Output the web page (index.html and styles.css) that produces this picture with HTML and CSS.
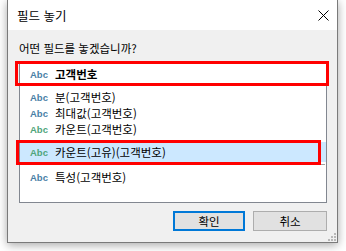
FILE: index.html
```html
<!DOCTYPE html>
<html lang="ko">
<head>
  <meta charset="UTF-8">
  <title>필드 놓기</title>
  <link rel="stylesheet" href="styles.css">
</head>
<body>

<div class="dialog">
  <div class="titlebar">
    <span class="title">필드 놓기</span>
    <svg class="close" width="11" height="11" viewBox="0 0 11 11">
      <path d="M0.5 0.5 L10.5 10.5 M10.5 0.5 L0.5 10.5" stroke="#000" stroke-width="1" fill="none"/>
    </svg>
  </div>

  <div class="content">
    <p class="prompt">어떤 필드를 놓겠습니까?</p>

    <div class="listbox">
      <div class="item item-head marked"><span class="type">Abc</span><span class="name">고객번호</span></div>
      <div class="item first-agg"><span class="type">Abc</span><span class="name">분(고객번호)</span></div>
      <div class="item"><span class="type">Abc</span><span class="name">최대값(고객번호)</span></div>
      <div class="item"><span class="type green">Abc</span><span class="name">카운트(고객번호)</span></div>
      <div class="item item-selected marked-2"><span class="type green">Abc</span><span class="name">카운트(고유)(고객번호)</span></div>
      <div class="separator"></div>
      <div class="item"><span class="type">Abc</span><span class="name">특성(고객번호)</span></div>
    </div>

    <div class="buttons">
      <button class="btn btn-ok">확인</button>
      <button class="btn btn-cancel">취소</button>
    </div>

    <svg class="grip" width="9" height="9" viewBox="0 0 9 9">
      <rect x="7" y="1" width="2" height="2" fill="#b8b8b8"/>
      <rect x="4" y="4" width="2" height="2" fill="#b8b8b8"/>
      <rect x="7" y="4" width="2" height="2" fill="#b8b8b8"/>
      <rect x="1" y="7" width="2" height="2" fill="#b8b8b8"/>
      <rect x="4" y="7" width="2" height="2" fill="#b8b8b8"/>
      <rect x="7" y="7" width="2" height="2" fill="#b8b8b8"/>
    </svg>
  </div>
</div>

</body>
</html>
```

FILE: styles.css
```css
* { box-sizing: border-box; }
body { margin: 0; width: 346px; height: 251px; overflow: hidden; background: #fff; font-family: "Noto Sans CJK KR", sans-serif; color: #000; }

.dialog { margin-left: 7px; width: 331px; height: 243px; border: 1px solid #7a7a7a; border-top: none; background: #f0f0f0; box-shadow: 0 2px 9px rgba(0,0,0,0.35); display: flex; flex-direction: column; }

.titlebar { height: 30px; background: #fff; display: flex; align-items: center; justify-content: space-between; padding: 1px 8px 0 9px; }
.title { font-size: 12.5px; line-height: 16px; }
.close { display: block; margin-top: 0; }

.content { flex: 1; position: relative; padding: 0 10px 0 11px; display: flex; flex-direction: column; }
.prompt { margin: 11px 0 8px; font-size: 11.5px; line-height: 14px; }

.listbox { width: 308px; height: 140px; background: #fff; border: 1px solid #828790; display: flex; flex-direction: column; }

.item { position: relative; display: flex; align-items: center; height: 16px; padding-left: 10px; font-size: 11.5px; white-space: nowrap; }
.item-head { height: 20px; }
.item-head .name { font-weight: bold; }
.first-agg { margin-top: 5px; }
.item-selected { height: 20px; margin-top: 5px; background: #cce8ff; }
.separator { height: 1px; margin: 2px 1px 4px 0; background: #a0a0a0; }

.type { width: 25px; flex: none; font-family: "Liberation Sans", Arial, sans-serif; font-size: 9.5px; font-weight: bold; color: #4a7fa6; }
.type.green { color: #4fa57c; }
.name { line-height: 14px; }

/* red highlight marks drawn over the list */
.marked::after, .marked-2::after { content: ""; position: absolute; border: 3px solid #f00; }
.marked::after { top: -3px; bottom: -2px; left: -5px; right: -3px; }
.marked-2::after { top: -2px; bottom: -3px; left: -4px; right: 5px; }

.buttons { margin-top: 8px; display: flex; justify-content: flex-end; gap: 8px; }
.btn { height: 20px; padding: 0; background: #e1e1e1; border: 1px solid #adadad; font-family: "Noto Sans CJK KR", sans-serif; font-size: 11.5px; line-height: 16px; color: #000; }
.btn-ok { width: 72px; border: 2px solid #0078d7; }
.btn-cancel { width: 74px; }

.grip { position: absolute; right: 1px; bottom: 1px; }
```
